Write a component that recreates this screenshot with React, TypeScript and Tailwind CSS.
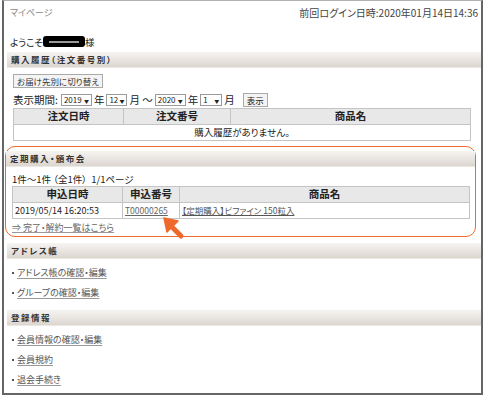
import React from 'react'

const font = {
  fontFamily: '"Noto Sans CJK JP", "Noto Sans", sans-serif',
  fontFeatureSettings: '"palt"',
}

function SectionBar({ title }: { title: string }) {
  return (
    <div className="h-[16px] flex items-center pl-[4px] bg-gradient-to-b from-[#f6f4f2] to-[#dcd6d0] border-b border-[#ece8e4]">
      <span className="text-[8.5px] font-bold tracking-[1.5px] text-[#333]">{title}</span>
    </div>
  )
}

function Select({ value, w }: { value: string; w: string }) {
  return (
    <span className={`${w} h-[12px] border border-[#9a9a9a] bg-white flex items-center justify-between px-[2px] text-[8px] leading-none text-[#222]`}>
      <span>{value}</span>
      <span className="text-[5px]">▼</span>
    </span>
  )
}

function LinkItem({ label }: { label: string }) {
  return (
    <div className="h-[20px] flex items-center pl-[8px] text-[9px] text-[#555]">
      <span className="w-[2px] h-[2px] bg-[#555] mr-[3px]" />
      <span className="underline underline-offset-2 decoration-[#999]">{label}</span>
    </div>
  )
}

export default function App() {
  return (
    <div className="w-[484px] h-[398px] bg-white relative" style={font}>
      <div className="ml-[2px] w-[481px] h-[395px] border-l-2 border-r-2 border-b-2 border-t border-[#666] border-t-[#b0b0b0] flex flex-col">
        {/* top line */}
        <div className="h-[23px] flex items-center justify-between pl-[6px] pr-[3px]">
          <span className="text-[9px] text-[#888]">マイページ</span>
          <span className="text-[10px] text-[#444]">前回ログイン日時:2020年01月14日14:36</span>
        </div>

        <div className="h-[28px] pt-[11px] pl-[6px] flex items-start text-[9.5px] text-[#222]">
          <span>ようこそ</span>
          <span className="w-[42px] h-[11px] mt-[1px] bg-black rounded-[3px] flex items-center justify-center">
            <span className="w-[30px] h-[2px] bg-[#999]" />
          </span>
          <span>様</span>
        </div>

        <div className="ml-[3px]">
          <SectionBar title="購入履歴（注文番号別）" />
        </div>

        <div className="pl-[9px] pt-[6px] flex flex-col items-start">
          <button className="h-[14px] px-[3px] border border-[#aaa] bg-[#f4f4f4] text-[8.5px] leading-none text-[#333]">
            お届け先別に切り替え
          </button>
          <div className="h-[14px] mt-[5px] flex items-center gap-[2px] text-[10.5px] text-[#222]">
            <span className="mr-[1px]">表示期間:</span>
            <Select value="2019" w="w-[31px]" />
            <span>年</span>
            <Select value="12" w="w-[21px]" />
            <span>月 〜</span>
            <Select value="2020" w="w-[31px]" />
            <span>年</span>
            <Select value="1" w="w-[22px]" />
            <span>月</span>
            <span className="ml-[6px] h-[14px] px-[3px] border border-[#aaa] bg-[#f4f4f4] text-[8.5px] flex items-center">表示</span>
          </div>
          <table className="mt-[1px] w-[458px] border-collapse text-[10.5px] text-[#222]">
            <thead>
              <tr className="h-[16px] bg-[#e8e8e8]">
                <th className="w-[110px] border border-[#c4c4c4] font-bold leading-none">注文日時</th>
                <th className="w-[107px] border border-[#c4c4c4] font-bold leading-none">注文番号</th>
                <th className="border border-[#c4c4c4] font-bold leading-none">商品名</th>
              </tr>
            </thead>
            <tbody>
              <tr className="h-[16px]">
                <td colSpan={3} className="border border-[#c4c4c4] text-center leading-none text-[9.5px]">購入履歴がありません。</td>
              </tr>
            </tbody>
          </table>
        </div>

        {/* highlighted section */}
        <div className="mt-[5px] ml-[1px] mr-[5px] h-[91px] border-[1.5px] border-[#ee6a2c] rounded-[10px] pt-[4px]">
          <SectionBar title="定期購入・頒布会" />
          <div className="pl-[6px]">
            <div className="h-[14px] mt-[5px] flex items-center text-[9.5px] text-[#222] whitespace-pre">
              1件〜1件 （全1件）  1/1ページ
            </div>
            <table className="w-[458px] border-collapse text-[10.5px] text-[#222]">
              <thead>
                <tr className="h-[16px] bg-[#e8e8e8]">
                  <th className="w-[110px] border border-[#c4c4c4] font-bold leading-none">申込日時</th>
                  <th className="w-[57px] border border-[#c4c4c4] font-bold leading-none">申込番号</th>
                  <th className="border border-[#c4c4c4] font-bold leading-none">商品名</th>
                </tr>
              </thead>
              <tbody>
                <tr className="h-[16px]">
                  <td className="border border-[#c4c4c4] pl-[2px] leading-none text-[9px]">2019/05/14 16:20:53</td>
                  <td className="border border-[#c4c4c4] pl-[2px] leading-none text-[8.5px] text-[#666] underline">T00000265</td>
                  <td className="border border-[#c4c4c4] pl-[2px] leading-none text-[8.5px] text-[#555] underline">【定期購入】ビファイン 150粒入</td>
                </tr>
              </tbody>
            </table>
            <div className="h-[15px] mt-[1px] flex items-center text-[9px] text-[#666]">
              <span className="underline decoration-[#999]">⇒ 完了・解約一覧はこちら</span>
            </div>
          </div>
        </div>

        <div className="mt-[6px] ml-[3px]">
          <SectionBar title="アドレス帳" />
        </div>
        <div className="pt-[4px] pb-[7px]">
          <LinkItem label="アドレス帳の確認・編集" />
          <LinkItem label="グループの確認・編集" />
        </div>

        <div className="ml-[3px]">
          <SectionBar title="登録情報" />
        </div>
        <div className="pt-[4px]">
          <LinkItem label="会員情報の確認・編集" />
          <LinkItem label="会員規約" />
          <LinkItem label="退会手続き" />
        </div>
      </div>

      {/* annotation arrow */}
      <svg className="absolute left-[160px] top-[214px]" width="26" height="26" viewBox="0 0 26 26">
        <path d="M21 22 L11 12" stroke="#ee6a2c" strokeWidth="5" strokeLinecap="round" />
        <path d="M4 4 L18 7 L7 18 Z" fill="#ee6a2c" stroke="#ee6a2c" strokeWidth="1.5" strokeLinejoin="round" />
      </svg>
    </div>
  )
}
